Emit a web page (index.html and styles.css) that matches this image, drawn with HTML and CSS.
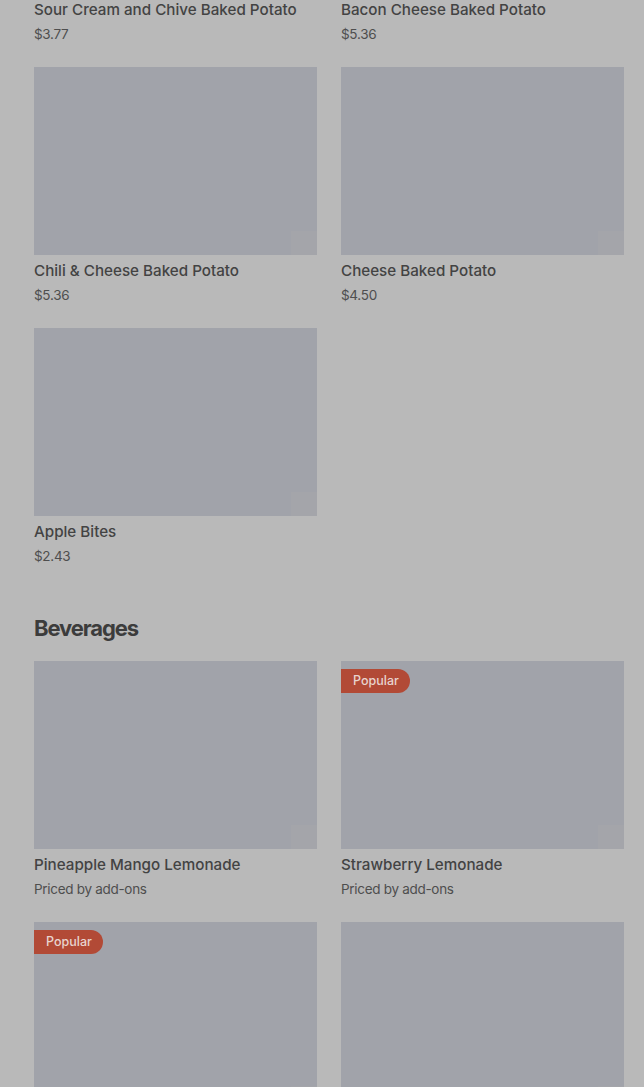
FILE: index.html
```html
<!DOCTYPE html>
<html>
<head>
<meta charset="utf-8">
<link rel="stylesheet" href="styles.css">
</head>
<body>
<main class="menu">
  <section class="category first">
    <div class="grid">
      <div class="card"><div class="thumb"></div><div class="name">Sour Cream and Chive Baked Potato</div><div class="price">$3.77</div></div>
      <div class="card"><div class="thumb"></div><div class="name">Bacon Cheese Baked Potato</div><div class="price">$5.36</div></div>
      <div class="card"><div class="thumb"></div><div class="name">Chili &amp; Cheese Baked Potato</div><div class="price">$5.36</div></div>
      <div class="card"><div class="thumb"></div><div class="name">Cheese Baked Potato</div><div class="price">$4.50</div></div>
      <div class="card"><div class="thumb"></div><div class="name">Apple Bites</div><div class="price">$2.43</div></div>
    </div>
  </section>
  <section class="category">
    <h2 class="heading">Beverages</h2>
    <div class="grid">
      <div class="card"><div class="thumb"></div><div class="name">Pineapple Mango Lemonade</div><div class="price">Priced by add-ons</div></div>
      <div class="card"><div class="thumb"><span class="badge">Popular</span></div><div class="name">Strawberry Lemonade</div><div class="price">Priced by add-ons</div></div>
      <div class="card"><div class="thumb tall"><span class="badge">Popular</span></div></div>
      <div class="card"><div class="thumb tall"></div></div>
    </div>
  </section>
</main>
</body>
</html>
```
FILE: styles.css
```css
html, body {
  margin: 0;
  padding: 0;
  background: #b9b9b9;
  overflow: hidden;
}
body {
  font-family: Inter, Roboto, "Liberation Sans", sans-serif;
  color: #404040;
}
.menu {
  padding: 0 20px 0 34px;
  display: flex;
  flex-direction: column;
  gap: 46px;
}
.category.first {
  margin-top: -194px;
}
.grid {
  display: grid;
  grid-template-columns: 283px 283px;
  column-gap: 24px;
  row-gap: 23px;
}
.card {
  display: flex;
  flex-direction: column;
}
.thumb {
  position: relative;
  height: 188px;
  background: #a1a3aa;
}
.thumb::after {
  content: "";
  position: absolute;
  right: 0;
  bottom: 0;
  width: 26px;
  height: 24px;
  background: #a4a5aa;
}
.name {
  margin-top: 5px;
  font-size: 15.2px;
  line-height: 22px;
  font-weight: 500;
  color: #434343;
  letter-spacing: 0;
}
.price {
  margin-top: 3px;
  font-size: 13.5px;
  line-height: 20px;
  color: #4e4e4e;
  letter-spacing: -0.3px;
}
.heading {
  margin: 0 0 17px;
  font-size: 22px;
  line-height: 32px;
  font-weight: 700;
  letter-spacing: -1.1px;
  color: #3c3c3c;
}
.badge {
  position: absolute;
  left: 0;
  top: 8px;
  height: 24px;
  line-height: 24px;
  padding: 0 11px 0 12px;
  border-radius: 0 12px 12px 0;
  background: #b24a36;
  color: #e8d4cf;
  font-size: 12.5px;
  font-weight: 500;
}
```
